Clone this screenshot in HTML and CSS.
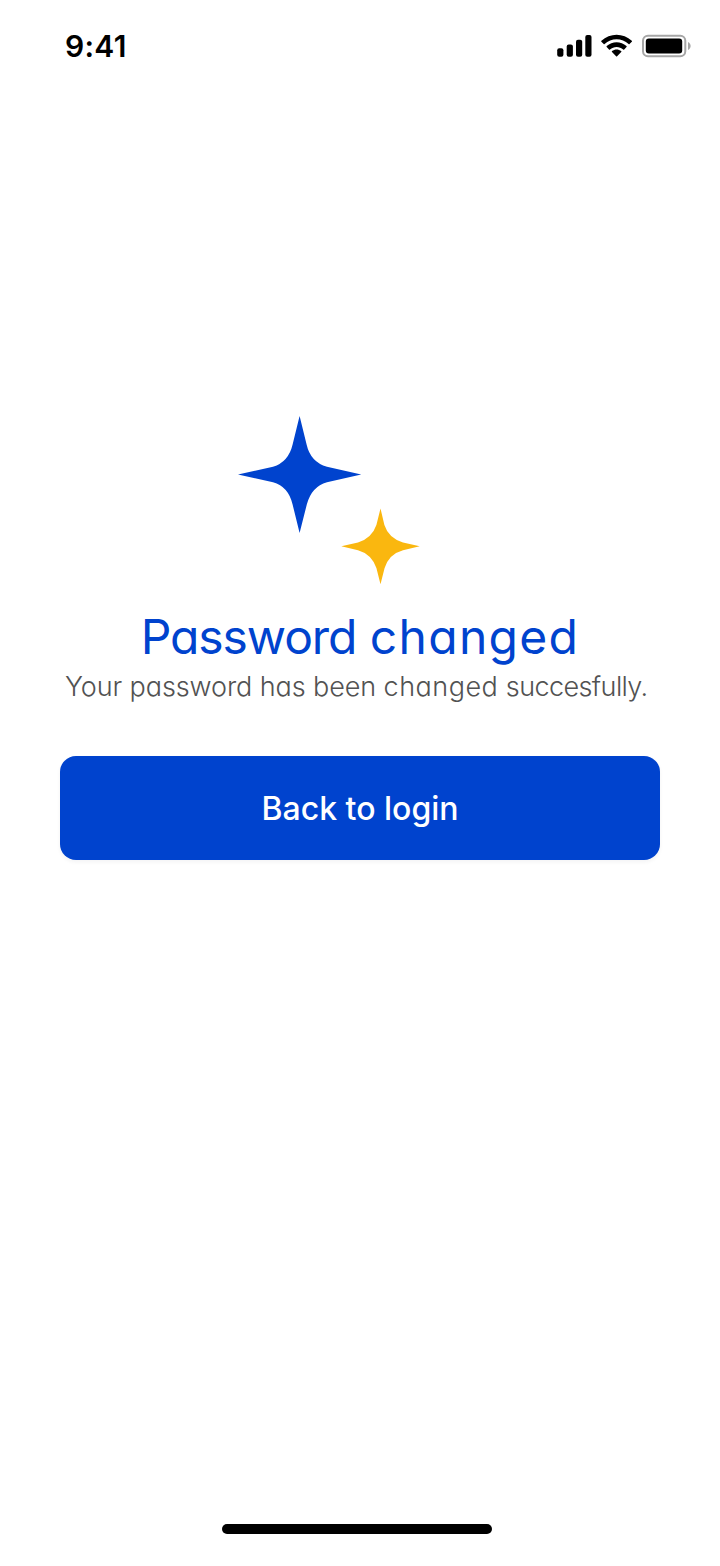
FILE: index.html
```html
<!DOCTYPE html>
<html lang="en">
<head>
<meta charset="utf-8">
<title>Password changed</title>
<link rel="stylesheet" href="styles.css">
</head>
<body>
<div class="screen">
  <header class="status-bar">
    <span class="time">9:41</span>
    <svg class="status-icons" width="136" height="24" viewBox="556 34 136 24" aria-hidden="true">
      <rect x="557.2" y="48.2" width="6.2" height="8.5" rx="2"/>
      <rect x="566.7" y="44.6" width="6.2" height="12.1" rx="2"/>
      <rect x="576" y="39.8" width="6.2" height="16.9" rx="2"/>
      <rect x="585.3" y="35" width="6.2" height="21.7" rx="2"/>
      <path d="M616.6 39.2c4.5 0 8.700 1.700 12 4.900q.5.400.9 0l2.300-2.400q.5-.5 0-1c-8.500-8.100-21.900-8.100-30.400 0q-.5.500 0 1l2.300 2.400q.4.400.9 0c3.300-3.200 7.500-4.900 12-4.900z"/>
      <path d="M616.600 46.900c2.500 0 4.800.9 6.600 2.600q.5.500 1 0l2.300-2.400q.5-.5 0-1c-5.600-5.300-14.200-5.300-19.800 0q-.5.500 0 1l2.300 2.400q.5.500 1 0c1.800-1.700 4.100-2.600 6.600-2.600z"/>
      <path d="M621.200 52.100q.5-.5 0-1c-2.700-2.200-6.500-2.200-9.200 0q-.5.500 0 1l4.100 4.200q.5.500 1 0z"/>
      <rect class="battery-case" x="643" y="35.700" width="42.300" height="20.600" rx="5"/>
      <rect x="645.800" y="38.500" width="36.400" height="15" rx="3"/>
      <path class="battery-cap" d="M688 42v8c3.500-1.500 3.500-6.500 0-8z"/>
    </svg>
  </header>
  <main class="content">
    <svg class="sparkles" width="184" height="170" viewBox="238 416 184 170" aria-hidden="true">
      <path class="star-large" d="M299.600 416L306.600 444.500Q310.500 462 327 466.800L361.200 474.500L327 482.200Q311.500 486.500 306.800 504.500L299.600 533L292.600 504.500Q288.500 486.500 273 482.200L238 474.500L273 466.800Q288.500 462 292.600 444.500Z"/>
      <path class="star-small" d="M380.500 508.500L384.400 525Q388.500 538 403 542.500L419.700 546.300L403 550.200Q389 554 384.600 568L380.500 584.300L376.400 568Q371.500 554 358 550.200L341.300 546.300L358 542.500Q372 538 376.400 525Z"/>
    </svg>
    <h1 class="title"><span class="title-tight">Password</span> <span class="title-wide">changed</span></h1>
    <p class="message">Your password has been <span class="message-wide">changed</span> <span class="message-tight">succesfully.</span></p>
    <button class="button" type="button">Back to login</button>
  </main>
  <div class="home-indicator"></div>
</div>
</body>
</html>
```
FILE: styles.css
```css
body {
  margin: 0;
  background: #fff;
  font-family: Inter, "Liberation Sans", sans-serif;
}

.screen {
  display: flex;
  flex-direction: column;
  box-sizing: border-box;
  width: 720px;
  height: 1566px;
  padding-bottom: 32px;
}

.status-bar {
  display: flex;
  justify-content: space-between;
  align-items: center;
  height: 92px;
  padding: 0 28px 0 65px;
}

.time {
  padding-bottom: 1px;
  font-size: 30px;
  font-weight: 600;
  line-height: 36px;
  letter-spacing: 0.3px;
}

.battery-case {
  fill: none;
  stroke: #a6a6a6;
  stroke-width: 2;
}

.battery-cap {
  fill: #a6a6a6;
}

.content {
  display: flex;
  flex: 1;
  flex-direction: column;
  padding: 324px 60px 0;
}

.sparkles {
  margin-left: 178px;
}

.star-large {
  fill: #0043ce;
}

.star-small {
  fill: #fab70f;
}

.title {
  margin: 21px 0 0;
  color: #0043ce;
  font-size: 48px;
  font-weight: 430;
  line-height: 60px;
  text-align: center;
  white-space: nowrap;
  font-feature-settings: "cv11";
}

.title-tight {
  letter-spacing: -1.1px;
}

.title-wide {
  letter-spacing: 1.3px;
}

.message {
  margin: 0 0 0 5px;
  height: 49px;
  color: #525252;
  font-size: 27px;
  font-weight: 350;
  line-height: 39px;
  letter-spacing: -0.1px;
  white-space: nowrap;
  font-feature-settings: "cv11";
}

.message-wide {
  letter-spacing: 0.5px;
}

.message-tight {
  letter-spacing: -0.6px;
}

.button {
  height: 104px;
  margin-top: 40px;
  padding: 2px 0 0;
  border: 0;
  border-radius: 16px;
  background: #0043ce;
  box-shadow: 0 2px 4px rgba(16, 24, 40, 0.05);
  color: #fff;
  font: 500 32px/48px Inter, "Liberation Sans", sans-serif;
}

.home-indicator {
  width: 270px;
  height: 10px;
  margin-left: 222px;
  border-radius: 5px;
  background: #000;
}
```
